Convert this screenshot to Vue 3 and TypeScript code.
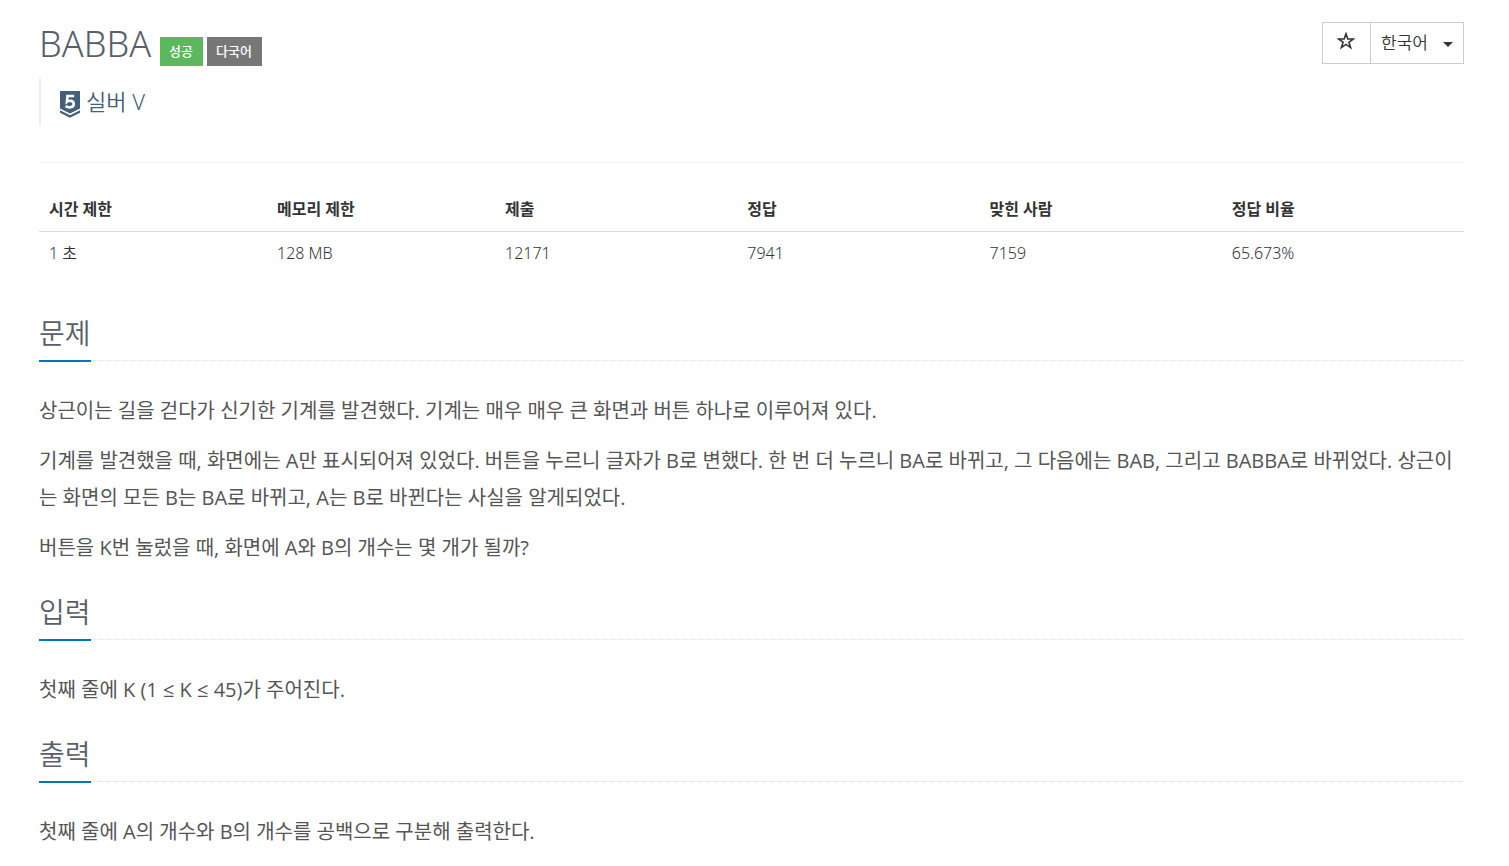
<script setup lang="ts">
import { ref } from 'vue'

interface Stat {
  label: string
  value: string
  width: string
}

interface Section {
  id: string
  title: string
  paragraphs: string[]
}

const language = ref('ko')
const starred = ref(false)

const stats: Stat[] = [
  { label: '시간 제한', value: '1 초', width: '16%' },
  { label: '메모리 제한', value: '128 MB', width: '16%' },
  { label: '제출', value: '12171', width: '17%' },
  { label: '정답', value: '7941', width: '17%' },
  { label: '맞힌 사람', value: '7159', width: '17%' },
  { label: '정답 비율', value: '65.673%', width: '17%' },
]

const sections: Section[] = [
  {
    id: 'description',
    title: '문제',
    paragraphs: [
      '상근이는 길을 걷다가 신기한 기계를 발견했다. 기계는 매우 매우 큰 화면과 버튼 하나로 이루어져 있다.',
      '기계를 발견했을 때, 화면에는 A만 표시되어져 있었다. 버튼을 누르니 글자가 B로 변했다. 한 번 더 누르니 BA로 바뀌고, 그 다음에는 BAB, 그리고 BABBA로 바뀌었다. 상근이는 화면의 모든 B는 BA로 바뀌고, A는 B로 바뀐다는 사실을 알게되었다.',
      '버튼을 K번 눌렀을 때, 화면에 A와 B의 개수는 몇 개가 될까?',
    ],
  },
  { id: 'input', title: '입력', paragraphs: ['첫째 줄에 K (1 ≤ K ≤ 45)가 주어진다.'] },
  { id: 'output', title: '출력', paragraphs: ['첫째 줄에 A의 개수와 B의 개수를 공백으로 구분해 출력한다.'] },
]
</script>

<template>
  <main class="problem">
    <header class="top">
      <div class="title-row">
        <h1>BABBA</h1>
        <span class="label success">성공</span>
        <span class="label lang">다국어</span>
      </div>
      <div class="controls">
        <button
          class="star"
          type="button"
          aria-label="즐겨찾기"
          :aria-pressed="starred"
          @click="starred = !starred"
        >
          <svg viewBox="0 0 18 18" width="18" height="18" aria-hidden="true">
            <path
              d="M9 1.8 10.8 7H16.4L11.9 10.3 13.6 15.6 9 12.4 4.4 15.6 6.1 10.3 1.6 7H7.2Z"
              :fill="starred ? '#333' : 'none'"
              stroke="#333"
              stroke-width="1.6"
            />
          </svg>
        </button>
        <div class="language">
          <select v-model="language" aria-label="언어">
            <option value="ko">한국어</option>
          </select>
          <svg class="caret" viewBox="0 0 10 5" width="10" height="5" aria-hidden="true">
            <path d="M0 0H10L5 5Z" fill="#333" />
          </svg>
        </div>
      </div>
    </header>

    <blockquote class="tier">
      <svg viewBox="0 0 20 27" width="20" height="27" aria-hidden="true">
        <path d="M0 0H20V17.5L10 22.5 0 17.5Z" fill="#435f7a" />
        <path d="M0 19.2 10 24.2 20 19.2V21.8L10 26.8 0 21.8Z" fill="#435f7a" />
        <path
          d="M14.2 5H7.5L7 10.6C8.4 9.4 13.7 9 13.7 12.9 13.7 16.9 8.4 17 5.6 15.1"
          fill="none"
          stroke="#fff"
          stroke-width="2.7"
        />
      </svg>
      <span>실버 V</span>
    </blockquote>

    <hr />

    <table>
      <colgroup>
        <col v-for="s in stats" :key="s.label" :style="{ width: s.width }" />
      </colgroup>
      <thead>
        <tr>
          <th v-for="s in stats" :key="s.label" scope="col">{{ s.label }}</th>
        </tr>
      </thead>
      <tbody>
        <tr>
          <td v-for="s in stats" :key="s.label">{{ s.value }}</td>
        </tr>
      </tbody>
    </table>

    <section v-for="section in sections" :key="section.id" :aria-labelledby="section.id">
      <div class="headline">
        <h2 :id="section.id">{{ section.title }}</h2>
      </div>
      <p v-for="(text, i) in section.paragraphs" :key="i">{{ text }}</p>
    </section>
  </main>
</template>

<style>
body {
  margin: 0;
  background: #fff;
}
</style>

<style scoped>
.problem {
  padding: 22px 45px 0 39px;
  color: #333;
  font-family: "Open Sans", "Noto Sans CJK KR", sans-serif;
  font-size: 16px;
}

.top {
  display: flex;
  justify-content: space-between;
  align-items: flex-start;
}

.title-row {
  display: flex;
  align-items: flex-end;
}

h1,
.tier,
td {
  font-family: "Noto Sans", "Noto Sans CJK KR", sans-serif;
  font-weight: 350;
}

h1 {
  margin: 0 9px 0 0;
  color: #585f69;
  font-size: 36px;
  line-height: 44px;
}

.label {
  margin-right: 4px;
  padding: 0 10px 0 9px;
  color: #fff;
  font-size: 13px;
  font-weight: 500;
  line-height: 29px;
}

.success {
  background: #5cb85c;
}

.lang {
  background: #777;
}

.controls {
  display: flex;
  box-sizing: border-box;
  height: 42px;
  border: 1px solid #ccc;
}

.star {
  display: flex;
  justify-content: center;
  width: 48px;
  padding: 9px 1px 0 0;
  border: 0;
  border-right: 1px solid #ccc;
  background: #fff;
  cursor: pointer;
}

.language {
  position: relative;
  display: flex;
}

select {
  width: 92px;
  padding: 0 10px 2px;
  border: 0;
  border-radius: 0;
  appearance: none;
  background: #fff;
  color: #333;
  font-family: inherit;
  font-size: 17px;
  font-weight: 350;
  cursor: pointer;
}

.caret {
  position: absolute;
  top: 19px;
  right: 10px;
  pointer-events: none;
}

.tier {
  display: flex;
  align-items: center;
  gap: 6px;
  box-sizing: border-box;
  height: 48px;
  margin: 12px 0 36px;
  padding: 4px 0 0 19px;
  border-left: 2px solid #eee;
  color: #435f7a;
  font-size: 22px;
  line-height: 24px;
}

.tier span {
  padding-bottom: 6px;
}

hr {
  margin: 0 0 24px;
  border: 0;
  border-top: 1px solid #eee;
}

table {
  width: 100%;
  margin-bottom: 36px;
  table-layout: fixed;
  border-collapse: collapse;
  line-height: 24px;
}

th,
td {
  padding: 10px;
  text-align: left;
}

th {
  border-bottom: 1px solid #ddd;
  font-weight: 700;
}

td {
  padding-top: 9px;
}

.headline {
  display: flex;
  margin-bottom: 31px;
  border-bottom: 1px dotted #dde2e9;
}

h2 {
  margin: 0 0 -2px;
  padding-bottom: 5px;
  border-bottom: 2px solid #0076bd;
  color: #585f69;
  font-size: 28px;
  font-weight: 350;
  line-height: 44px;
}

p {
  margin: 0 0 13px;
  color: #555;
  font-size: 20px;
  line-height: 37px;
  word-break: break-all;
}

section {
  padding-bottom: 11px;
}
</style>
